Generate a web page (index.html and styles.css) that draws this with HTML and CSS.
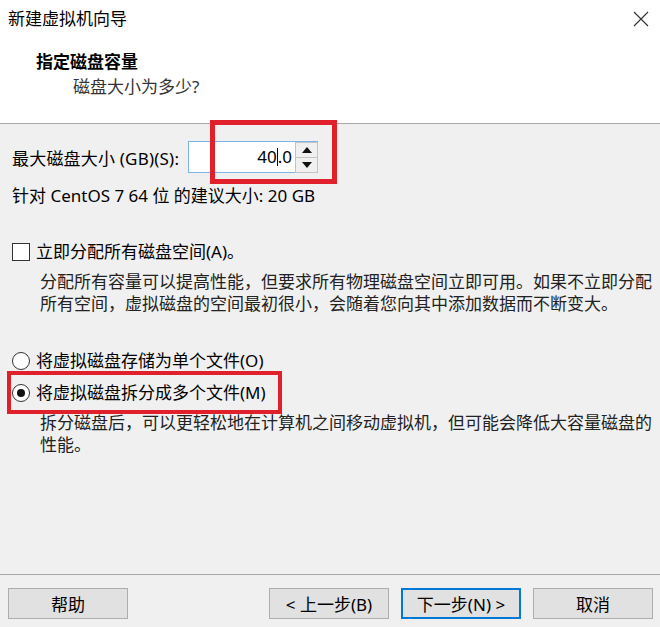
FILE: index.html
```html
<!DOCTYPE html>
<html lang="zh-CN">

<head>
  <meta charset="UTF-8">
  <meta name="viewport" content="width=device-width, initial-scale=1.0">
  <title>新建虚拟机向导</title>
  <link rel="stylesheet" href="styles.css">
</head>

<body>
  <div class="dialog">
    <div class="top">
      <div class="titlebar">
        <span class="title">新建虚拟机向导</span>
        <svg class="close" width="16" height="16" viewBox="0 0 16 16">
          <path d="M1 1 L15 15 M15 1 L1 15" stroke="#333" stroke-width="1.2" fill="none" />
        </svg>
      </div>
      <div class="heading">指定磁盘容量</div>
      <div class="subheading">磁盘大小为多少?</div>
    </div>

    <div class="content">
      <div class="size-row">
        <label class="size-label" for="size">最大磁盘大小 (GB)(S):</label>
        <div class="spin">
          <div class="spin-value">40<span class="caret"></span>.0</div>
          <div class="spin-buttons">
            <div class="spin-btn">
              <svg width="10" height="6" viewBox="0 0 10 6"><path d="M0 6 L5 0 L10 6 Z" fill="#111" /></svg>
            </div>
            <div class="spin-btn">
              <svg width="10" height="6" viewBox="0 0 10 6"><path d="M0 0 L5 6 L10 0 Z" fill="#111" /></svg>
            </div>
          </div>
        </div>
        <div class="mark mark-size"></div>
      </div>
      <p class="hint">针对 CentOS 7 64 位 的建议大小: 20 GB</p>

      <div class="option check-row">
        <span class="checkbox"></span>
        <span>立即分配所有磁盘空间(A)。</span>
      </div>
      <p class="note">分配所有容量可以提高性能，但要求所有物理磁盘空间立即可用。如果不立即分配所有空间，虚拟磁盘的空间最初很小，会随着您向其中添加数据而不断变大。</p>

      <div class="option radio-first">
        <span class="radio"></span>
        <span>将虚拟磁盘存储为单个文件(O)</span>
      </div>
      <div class="option radio-second">
        <span class="radio checked"></span>
        <span>将虚拟磁盘拆分成多个文件(M)</span>
        <div class="mark mark-split"></div>
      </div>
      <p class="note">拆分磁盘后，可以更轻松地在计算机之间移动虚拟机，但可能会降低大容量磁盘的性能。</p>
    </div>

    <div class="footer">
      <button class="button">帮助</button>
      <div class="spacer"></div>
      <button class="button">&lt; 上一步(B)</button>
      <button class="button primary">下一步(N) &gt;</button>
      <button class="button">取消</button>
    </div>
  </div>
</body>

</html>
```

FILE: styles.css
```css
html,
body {
  margin: 0;
  padding: 0;
  background-color: #f0f0f0;
  color: #000;
  font-family: "Noto Sans", "Noto Sans CJK SC", sans-serif;
  font-size: 17px;
}

* {
  box-sizing: border-box;
}

.dialog {
  width: 660px;
  height: 627px;
  display: flex;
  flex-direction: column;
}

.top {
  background-color: #fff;
  height: 124px;
  border-bottom: 1px solid #a8a8a8;
}

.titlebar {
  height: 37px;
  display: flex;
  align-items: center;
  justify-content: space-between;
  padding: 0 11px 0 8px;
}

.title {
  line-height: 22px;
}

.heading {
  margin-top: 14px;
  padding-left: 36px;
  line-height: 22px;
  font-weight: bold;
}

.subheading {
  margin-top: 3px;
  padding-left: 73px;
  line-height: 22px;
  color: #333;
}

.content {
  flex: 1;
  padding: 17px 4px 0 12px;
}

.size-row {
  position: relative;
  display: flex;
  align-items: center;
  height: 32px;
}

.size-label {
  width: 176px;
  letter-spacing: 0.2px;
}

.spin {
  display: flex;
  width: 130px;
  height: 32px;
  background-color: #fff;
  border: 1px solid #7ab4ea;
}

.spin-value {
  flex: 1;
  text-align: right;
  padding-right: 3px;
  line-height: 30px;
}

.caret {
  display: inline-block;
  width: 1px;
  height: 18px;
  background-color: #000;
  vertical-align: -3px;
}

.spin-buttons {
  width: 23px;
  display: flex;
  flex-direction: column;
  border: 1px solid #c4c4c4;
  margin: 0 -1px -1px 0;
}

.spin-btn {
  flex: 1;
  display: flex;
  align-items: center;
  justify-content: center;
  background-color: #f0f0f0;
}

.spin-btn + .spin-btn {
  border-top: 1px solid #c4c4c4;
}

.mark {
  position: absolute;
  border: 5px solid #e0202a;
  pointer-events: none;
}

.mark-size {
  left: 198px;
  top: -21px;
  width: 127px;
  height: 64px;
}

.hint {
  margin: 12px 0 0;
  line-height: 22px;
}

.option {
  display: flex;
  align-items: center;
  gap: 6px;
  height: 22px;
  line-height: 22px;
}

.check-row {
  margin-top: 34px;
}

.checkbox {
  width: 18px;
  height: 18px;
  background-color: #fff;
  border: 1px solid #333;
}

.radio {
  width: 18px;
  height: 18px;
  border-radius: 50%;
  background-color: #fff;
  border: 1px solid #333;
  display: flex;
  align-items: center;
  justify-content: center;
}

.radio.checked::after {
  content: "";
  width: 8px;
  height: 8px;
  border-radius: 50%;
  background-color: #111;
}

.note {
  margin: 8px 0 0 28px;
  line-height: 22px;
  color: #222;
}

.radio-first {
  margin-top: 35px;
}

.radio-second {
  position: relative;
  margin-top: 10px;
}

.mark-split {
  left: -5px;
  top: -11px;
  width: 275px;
  height: 43px;
  border-width: 4px;
}

.footer {
  height: 53px;
  border-top: 1px solid #a8a8a8;
  display: flex;
  align-items: flex-start;
  gap: 12px;
  padding: 13px 7px 0 8px;
}

.spacer {
  flex: 1;
}

.button {
  width: 120px;
  height: 31px;
  background-color: #e1e1e1;
  border: 1px solid #adadad;
  font-family: inherit;
  font-size: 17px;
  color: #000;
  padding: 0;
}

.button.primary {
  border: 2px solid #0078d7;
}
```
